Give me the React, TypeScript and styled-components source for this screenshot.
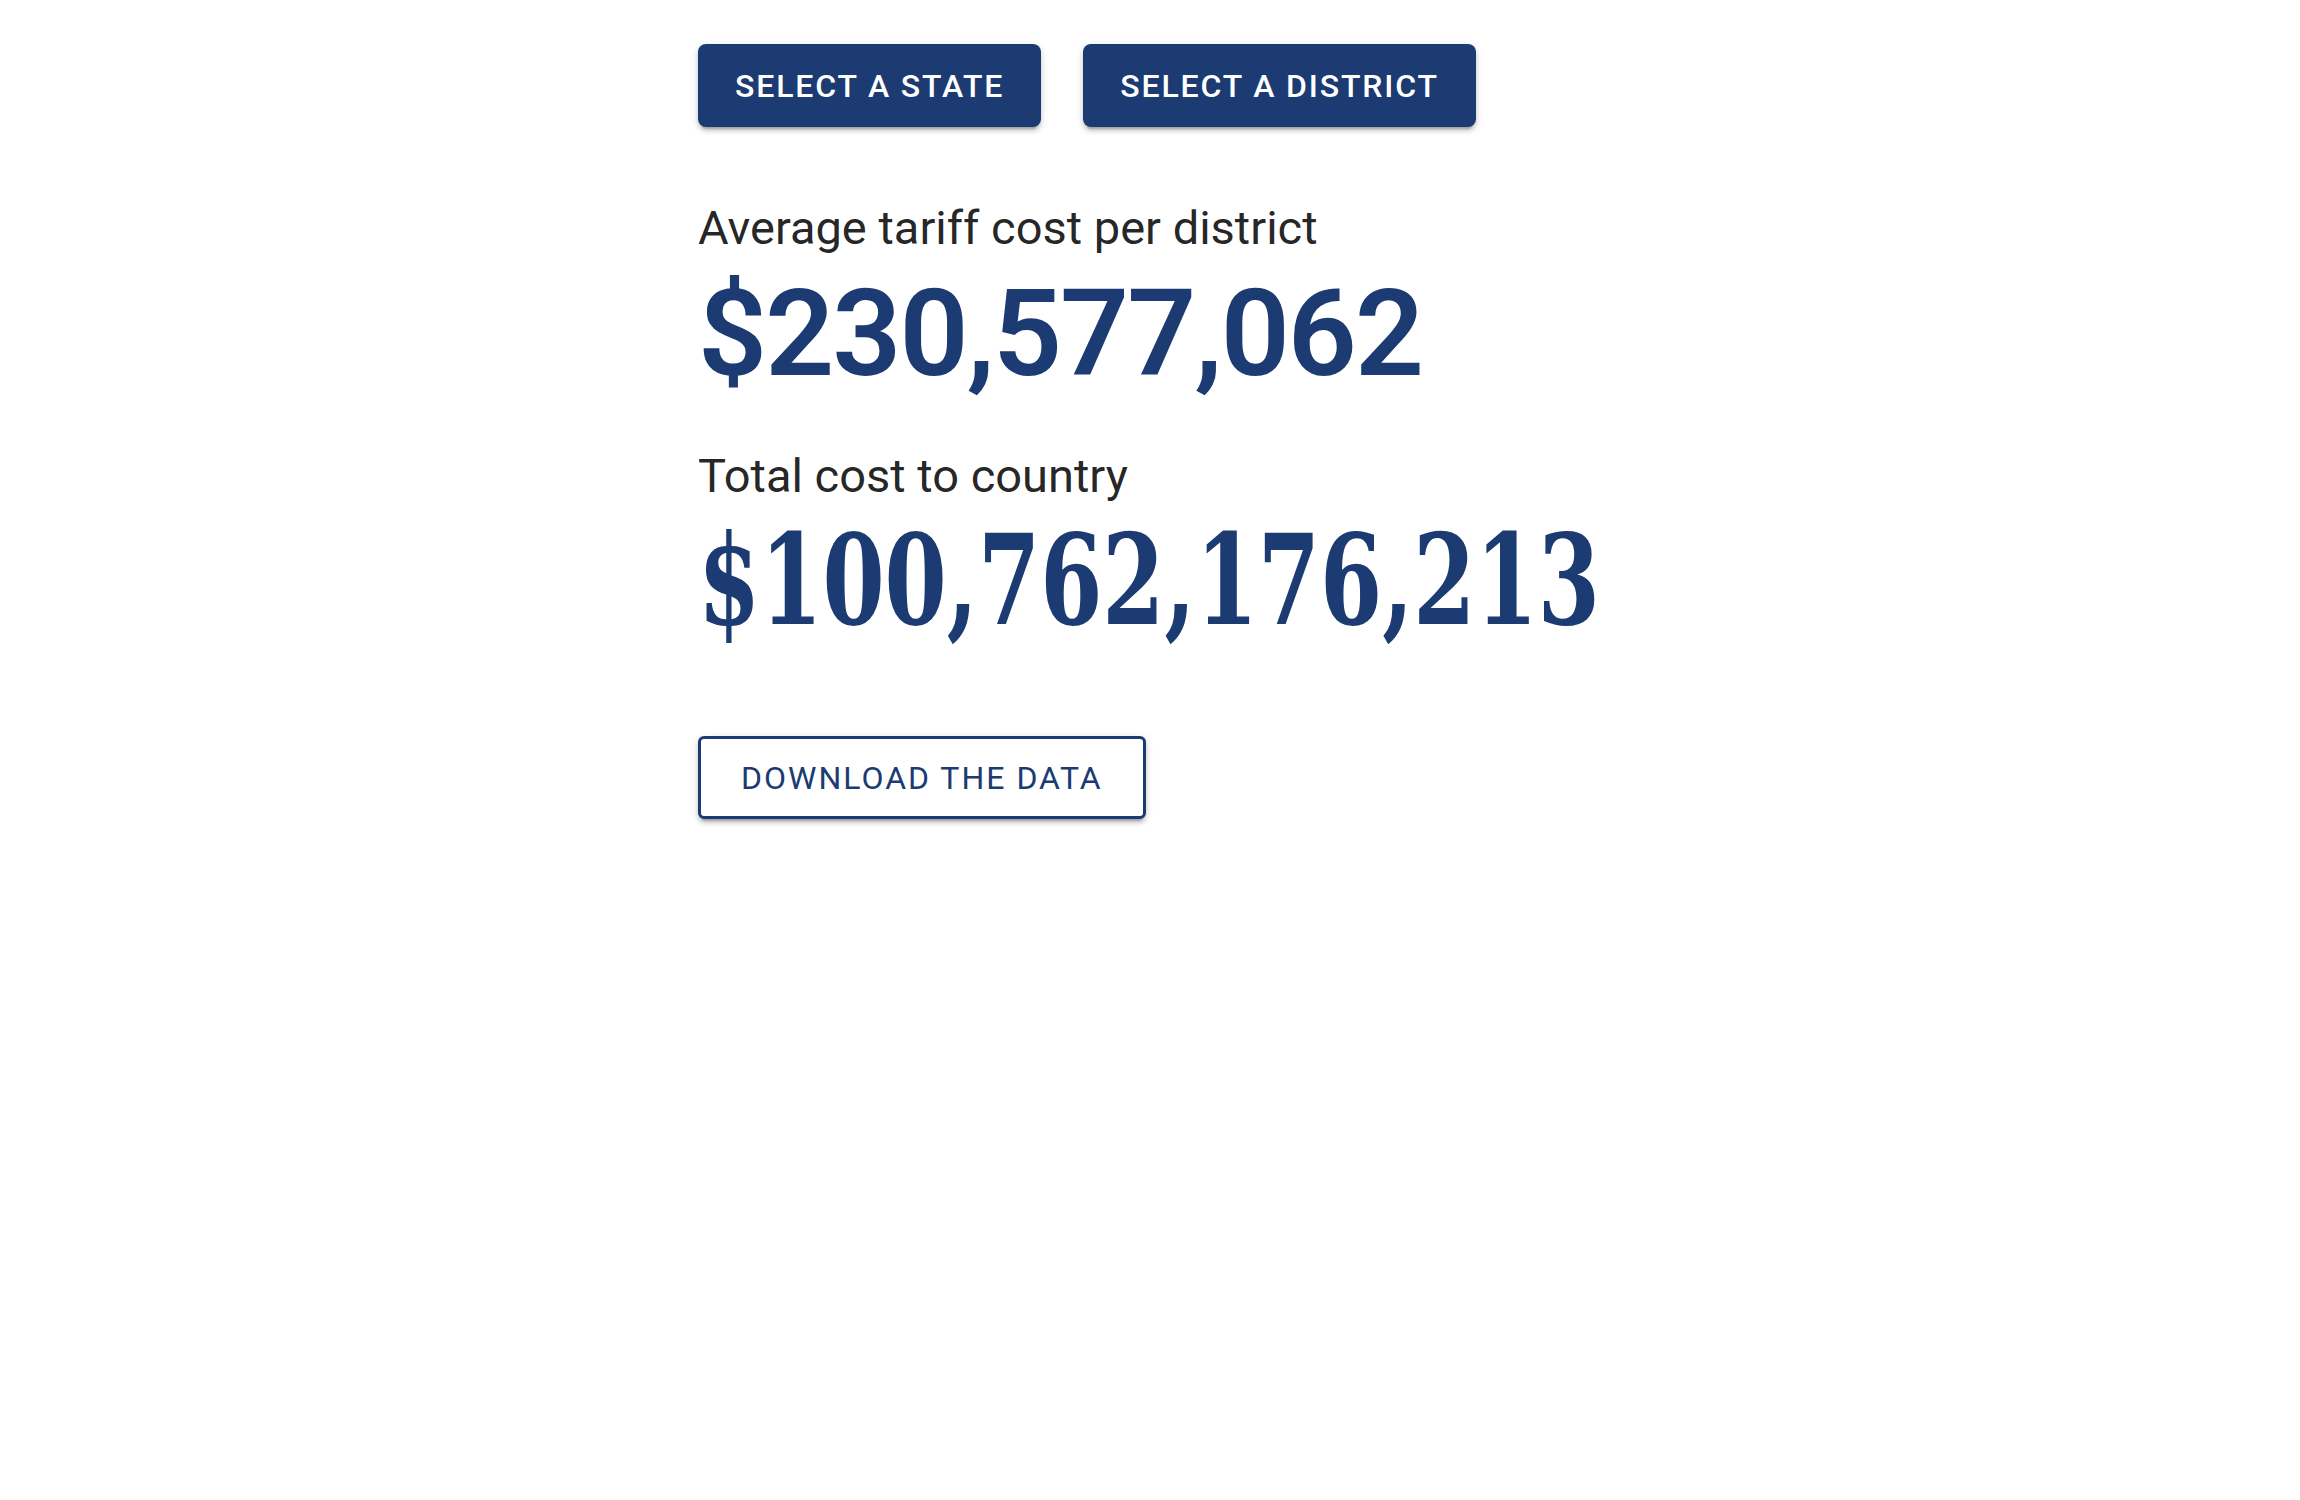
import React from "react";
import styled, { createGlobalStyle } from "styled-components";

const navy = "#1b3b72";
const ink = "rgba(0, 0, 0, 0.87)";

const GlobalStyle = createGlobalStyle`
  html, body {
    margin: 0;
    padding: 0;
    background: #ffffff;
  }
  body {
    font-family: Roboto, "Liberation Sans", Arial, sans-serif;
    color: ${ink};
  }
`;

const Page = styled.main`
  padding-top: 44px;
  min-height: 1456px;
`;

const Column = styled.div`
  width: 904px;
  margin: 0 auto;
  display: flex;
  flex-direction: column;
  align-items: flex-start;
`;

const ButtonRow = styled.div`
  display: flex;
  gap: 42px;
`;

const buttonShadow =
  "0 6px 2px -4px rgba(0,0,0,0.2), 0 4px 4px 0 rgba(0,0,0,0.14), 0 2px 10px 0 rgba(0,0,0,0.12)";

const SolidButton = styled.button`
  height: 83px;
  padding: 0 37px;
  border: none;
  border-radius: 8px;
  background: ${navy};
  color: #ffffff;
  font-family: Roboto, "Liberation Sans", Arial, sans-serif;
  font-size: 32px;
  font-weight: 500;
  letter-spacing: 1.85px;
  text-transform: uppercase;
  box-shadow: ${buttonShadow};
  cursor: pointer;
`;

const OutlineButton = styled.button`
  margin-top: 93px;
  height: 83px;
  padding: 0 40px;
  border: 3px solid ${navy};
  border-radius: 6px;
  background: #ffffff;
  color: ${navy};
  font-family: Roboto, "Liberation Sans", Arial, sans-serif;
  font-size: 32px;
  font-weight: 400;
  letter-spacing: 2px;
  text-transform: uppercase;
  box-shadow: ${buttonShadow};
  cursor: pointer;
`;

const Stat = styled.section<{ $gap: number }>`
  margin-top: ${(p) => p.$gap}px;
  display: flex;
  flex-direction: column;
  align-items: flex-start;
`;

const Label = styled.h5`
  margin: 0 0 10px;
  font-family: Roboto, "Liberation Sans", Arial, sans-serif;
  font-size: 47px;
  line-height: 64px;
  font-weight: 400;
  color: ${ink};
`;

const Figure = styled.span`
  display: inline-block;
  color: ${navy};
  white-space: nowrap;
  transform-origin: left center;
`;

// per-district average: plain sans numerals
const SansFigure = styled(Figure)`
  font-family: Roboto, "Liberation Sans", Arial, sans-serif;
  font-weight: 600;
  font-size: 121px;
  line-height: 124px;
  letter-spacing: -2px;
  margin-top: 2px;
`;

// national total: slab numerals, squeezed to the column
const SlabFigure = styled(Figure)`
  font-family: "DejaVu Serif", "Liberation Serif", serif;
  font-weight: 700;
  font-stretch: condensed;
  font-size: 125px;
  line-height: 125px;
  transform: scaleX(0.795);
`;

const money = (n: number) => "$" + n.toLocaleString("en-US");

export default function App() {
  const averagePerDistrict = 230577062;
  const countryTotal = 100762176213;

  return (
    <Page>
      <GlobalStyle />
      <Column>
        <ButtonRow>
          <SolidButton>Select a state</SolidButton>
          <SolidButton>Select a district</SolidButton>
        </ButtonRow>

        <Stat $gap={69}>
          <Label>Average tariff cost per district</Label>
          <SansFigure>{money(averagePerDistrict)}</SansFigure>
        </Stat>

        <Stat $gap={48}>
          <Label>Total cost to country</Label>
          <SlabFigure>{money(countryTotal)}</SlabFigure>
        </Stat>

        <OutlineButton>Download the data</OutlineButton>
      </Column>
    </Page>
  );
}
